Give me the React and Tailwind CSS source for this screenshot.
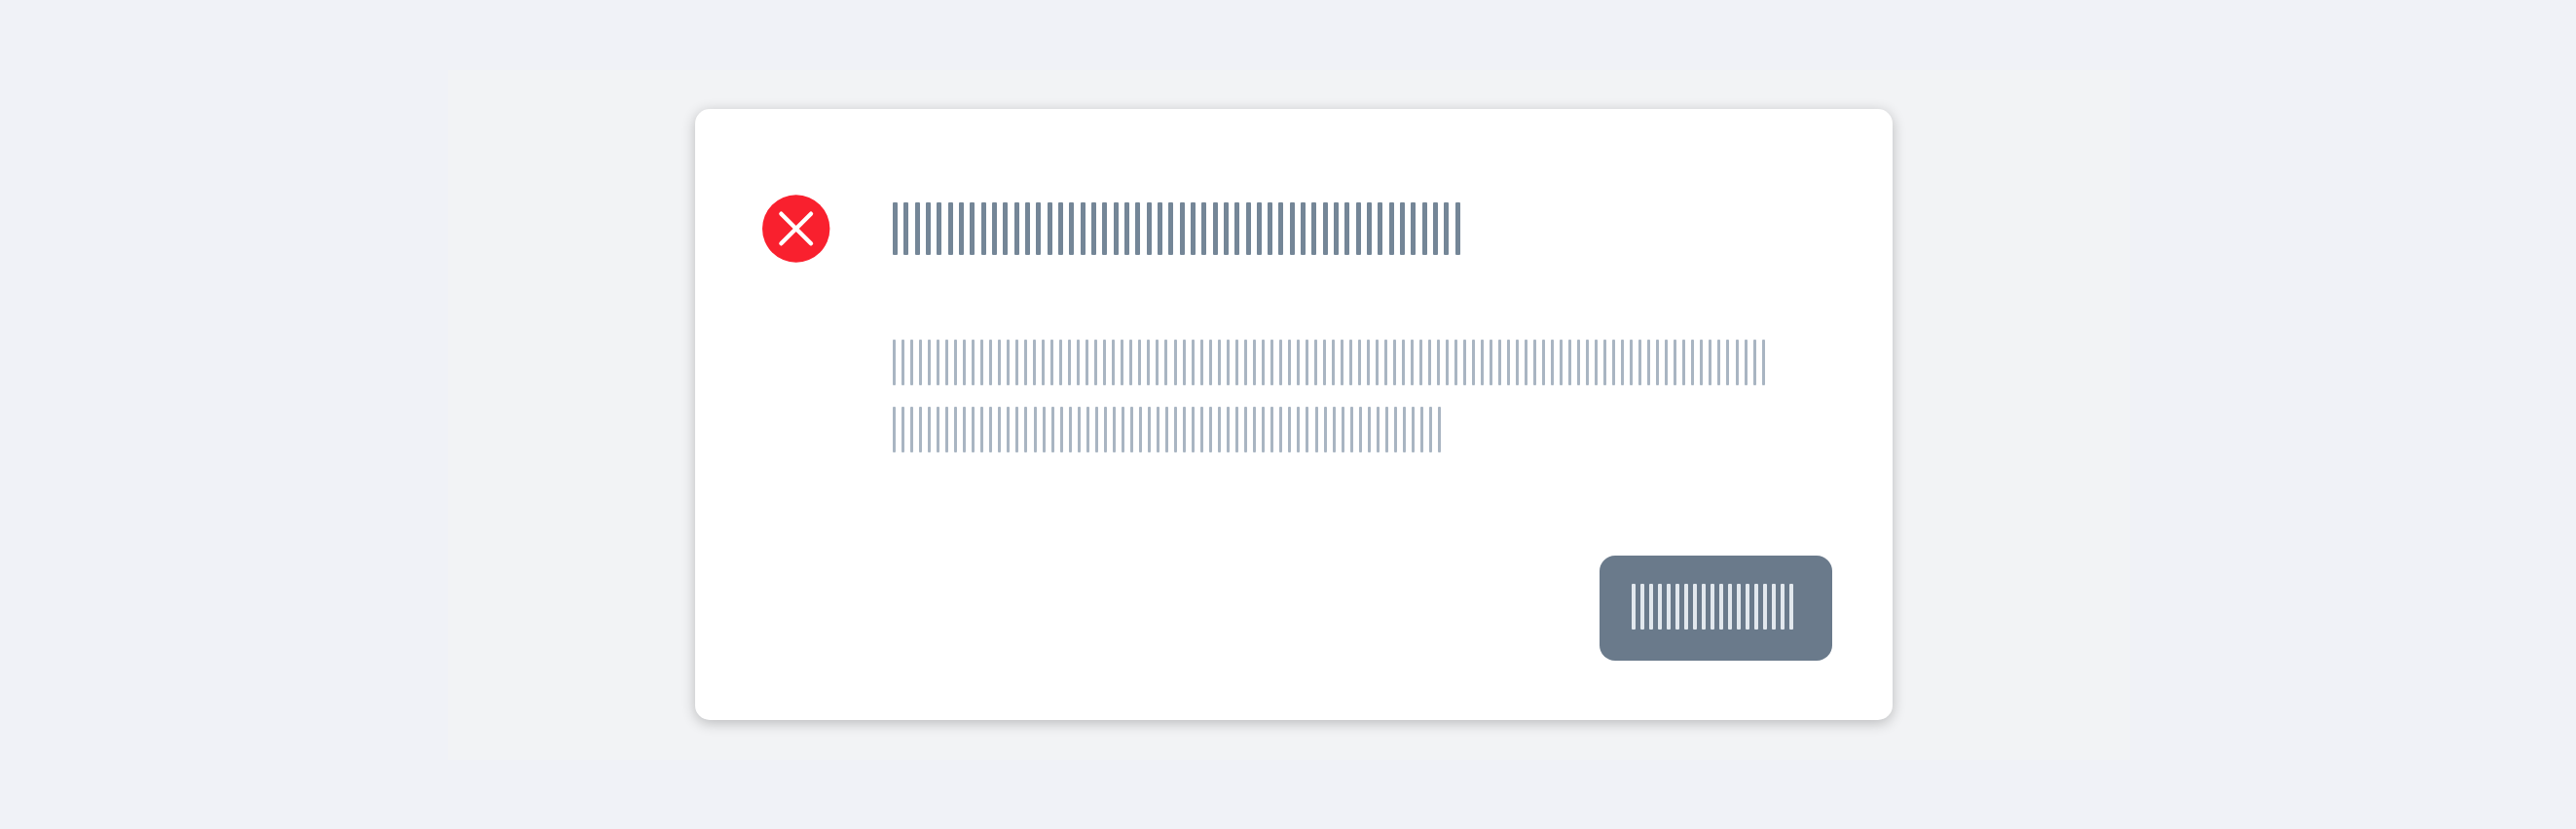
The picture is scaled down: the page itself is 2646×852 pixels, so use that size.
function Bars({ count, className, barClassName }) {
  return (
    <div className={`flex justify-between ${className}`} aria-hidden="true">
      {Array.from({ length: count }, (_, i) => (
        <span key={i} className={`h-full shrink-0 rounded-[1px] ${barClassName}`} />
      ))}
    </div>
  );
}

function ErrorIcon() {
  return (
    <svg className="size-[70px] shrink-0" viewBox="0.3 0 70 70" fill="none">
      <circle cx="35" cy="35" r="34.7" fill="#f9202e" />
      <path d="M19.7 19.7 50.3 50.3M50.3 19.7 19.7 50.3" stroke="#fff" strokeWidth="4.4" strokeLinecap="round" />
    </svg>
  );
}

export default function App() {
  return (
    <main className="h-[852px] w-[2646px] bg-[#f0f2f7] pt-[72px] pl-[460px]">
      <div className="h-[709px] w-[1728px] bg-[#f2f3f5] pt-[40px] pl-[254px]">
        <section className="flex h-[628px] w-[1230px] flex-col rounded-[15px] bg-white pt-[88px] pr-[62px] pb-[61px] pl-[69px] shadow-[0_3px_14px_rgba(0,0,0,0.24)]">
          <div className="flex gap-[64px]">
            <ErrorIcon />
            <div className="pt-[8px]">
              <Bars count={52} className="h-[54px] w-[583px]" barClassName="w-[5px] bg-[#748697]" />
              <Bars count={100} className="mt-[87px] h-[47px] w-[897px]" barClassName="w-[3px] bg-[#a9b5c2]" />
              <Bars count={63} className="mt-[22px] h-[47px] w-[563px]" barClassName="w-[3px] bg-[#a9b5c2]" />
            </div>
          </div>
          <button className="mt-auto flex h-[108px] w-[239px] justify-start self-end rounded-[16px] bg-[#6a7a8b] pt-[29px] pl-[33px]">
            <Bars count={19} className="h-[47px] w-[166px]" barClassName="w-[4px] bg-[#e2e8ee]" />
          </button>
        </section>
      </div>
    </main>
  );
}
